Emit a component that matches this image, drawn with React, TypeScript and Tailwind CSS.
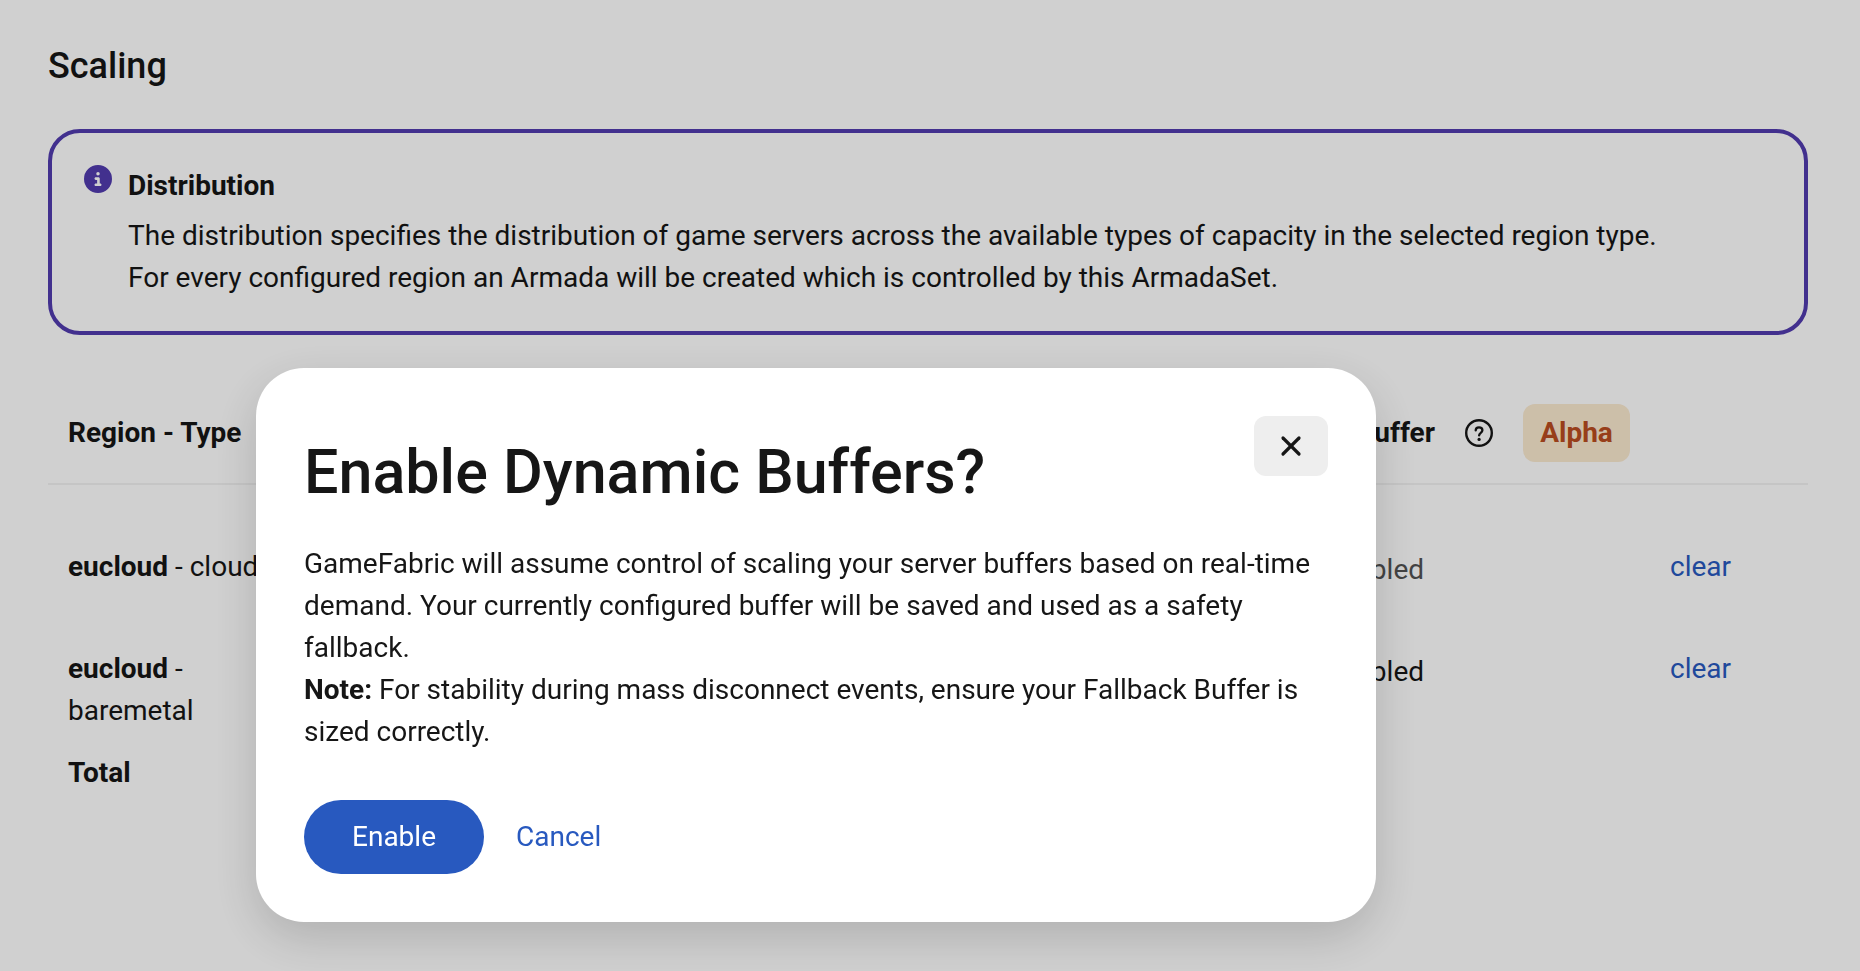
import { useState } from 'react';
import { X } from 'lucide-react';
import { FaCircleInfo } from 'react-icons/fa6';

interface RegionRow {
  id: string;
  region: string;
  type: string;
  locked: boolean;
}

const ROWS: RegionRow[] = [
  { id: 'eucloud-cloud', region: 'eucloud', type: 'cloud', locked: true },
  { id: 'eucloud-baremetal', region: 'eucloud', type: 'baremetal', locked: false },
];

function HelpIcon() {
  return (
    <svg width="28" height="28" viewBox="0 0 28 28" fill="none" stroke="currentColor" aria-hidden="true">
      <circle cx="14" cy="14" r="12.8" strokeWidth="2.4" />
      <path
        d="M10.7 11.4c0-1.9 1.4-3.1 3.3-3.1s3.4 1.2 3.4 3c0 2.5-3.3 2.5-3.3 5.1"
        strokeWidth="2.3"
        strokeLinecap="round"
      />
      <circle cx="14.1" cy="20.4" r="1.6" fill="currentColor" stroke="none" />
    </svg>
  );
}

function DistributionInfo() {
  return (
    <div className="flex items-start gap-4 rounded-[32px] border-4 border-[#523caf] p-8">
      <FaCircleInfo size={28} className="shrink-0 text-[#523caf]" />
      <div>
        <h2 className="mb-2 font-bold">Distribution</h2>
        <p>
          The distribution specifies the distribution of game servers across the available types of capacity in the selected region type.
          <br />
          For every configured region an Armada will be created which is controlled by this ArmadaSet.
        </p>
      </div>
    </div>
  );
}

function RegionTable() {
  return (
    <table className="mt-12 w-full table-fixed text-left">
      <colgroup>
        <col className="w-[250px]" />
        <col />
        <col className="w-[436px]" />
        <col className="w-[158px]" />
      </colgroup>
      <thead>
        <tr className="h-[101px] border-b-2 border-[#f2f2f2]">
          <th className="px-5 font-bold">Region - Type</th>
          <td />
          <th className="px-5 font-bold">
            <div className="flex items-center justify-end gap-[30px] whitespace-nowrap">
              Dynamic Buffer
              <button type="button" aria-label="About dynamic buffers">
                <HelpIcon />
              </button>
              <span className="w-[107px] rounded-xl bg-[#fbead0] py-2 text-center text-[#b94c20]">Alpha</span>
            </div>
          </th>
          <td />
        </tr>
      </thead>
      <tbody className="align-top">
        <tr aria-hidden="true" className="h-[42px]" />
        {ROWS.map(row => (
          <tr key={row.id} className="h-[102px]">
            <td className="px-5 pt-5">
              <b>{row.region}</b> - {row.type}
            </td>
            <td />
            <td className="px-5 pt-[23px]">
              <label className={`flex items-center gap-[18px] ${row.locked ? 'text-[#525252]' : ''}`}>
                <input
                  type="checkbox"
                  role="switch"
                  disabled={row.locked}
                  className="h-8 w-16 appearance-none rounded-full bg-[#e0e0e0]"
                />
                Disabled
              </label>
            </td>
            <td className="px-5 pt-5">
              <button type="button" className="text-[#2859bf]">clear</button>
            </td>
          </tr>
        ))}
        <tr>
          <td className="px-5 pt-5 font-bold">Total</td>
          <td />
          <td />
          <td />
        </tr>
      </tbody>
    </table>
  );
}

interface EnableDialogProps {
  onClose: () => void;
}

function EnableDialog({ onClose }: EnableDialogProps) {
  return (
    <div className="fixed inset-0 overflow-y-auto bg-black/[0.184] pt-[368px] pr-12 pl-64">
      <div
        role="dialog"
        aria-modal="true"
        aria-labelledby="dialog-title"
        className="w-full max-w-[1120px] rounded-[48px] bg-white p-12 shadow-[0_16px_48px_rgba(0,0,0,0.16)]"
      >
        <div className="mb-[35px] flex items-start justify-between">
          <h2 id="dialog-title" className="mt-5 text-[61px] leading-[72px] font-medium">
            Enable Dynamic Buffers?
          </h2>
          <button
            type="button"
            aria-label="Close"
            onClick={onClose}
            className="flex h-[60px] w-[74px] shrink-0 items-center justify-center rounded-xl bg-[#eeeeee]"
          >
            <X size={32} strokeWidth={2.4} />
          </button>
        </div>
        <p>
          GameFabric will assume control of scaling your server buffers based on real-time demand. Your currently
          configured buffer will be saved and used as a safety fallback.
        </p>
        <p>
          <b>Note:</b> For stability during mass disconnect events, ensure your Fallback Buffer is sized correctly.
        </p>
        <div className="mt-[47px] flex items-center gap-8">
          <button type="button" onClick={onClose} className="rounded-full bg-[#2859bf] px-12 py-4 text-white">
            Enable
          </button>
          <button type="button" onClick={onClose} className="text-[#2859bf]">Cancel</button>
        </div>
      </div>
    </div>
  );
}

export default function App() {
  const [open, setOpen] = useState(true);

  return (
    <main className="min-h-screen bg-white pt-[39px] pr-[52px] pl-12 font-['Roboto',sans-serif] text-[28px] leading-[42px] text-[#161616]">
      <h1 className="mb-9 text-[36px] leading-[54px] font-medium">Scaling</h1>
      <DistributionInfo />
      <RegionTable />
      {open && <EnableDialog onClose={() => setOpen(false)} />}
    </main>
  );
}
